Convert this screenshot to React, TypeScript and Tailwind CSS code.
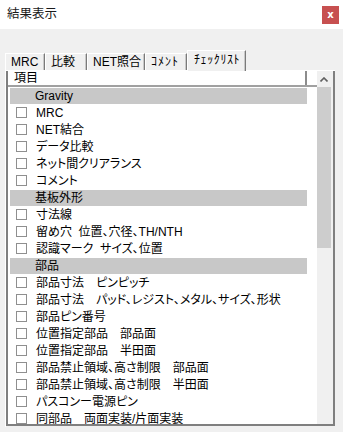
import React from 'react';

type Row = { kind: 'section' | 'item'; label: string };

const rows: Row[] = [
  { kind: 'section', label: 'Gravity' },
  { kind: 'item', label: 'MRC' },
  { kind: 'item', label: 'NET結合' },
  { kind: 'item', label: 'データ比較' },
  { kind: 'item', label: 'ネット間クリアランス' },
  { kind: 'item', label: 'コメント' },
  { kind: 'section', label: '基板外形' },
  { kind: 'item', label: '寸法線' },
  { kind: 'item', label: '留め穴  位置、穴径、TH/NTH' },
  { kind: 'item', label: '認識マーク  サイズ、位置' },
  { kind: 'section', label: '部品' },
  { kind: 'item', label: '部品寸法　ピンピッチ' },
  { kind: 'item', label: '部品寸法　パッド、レジスト、メタル、サイズ、形状' },
  { kind: 'item', label: '部品ピン番号' },
  { kind: 'item', label: '位置指定部品　部品面' },
  { kind: 'item', label: '位置指定部品　半田面' },
  { kind: 'item', label: '部品禁止領域、高さ制限　部品面' },
  { kind: 'item', label: '部品禁止領域、高さ制限　半田面' },
  { kind: 'item', label: 'パスコンー電源ピン' },
  { kind: 'item', label: '同部品　両面実装/片面実装' },
];

const tabs = [
  { label: 'MRC', w: 'w-[40px]', extra: '' },
  { label: '比較', w: 'w-[42px]', extra: '' },
  { label: 'NET照合', w: 'w-[58px]', extra: '' },
  { label: 'ｺﾒﾝﾄ', w: 'w-[42px]', extra: 'tracking-[1px]' },
];

export default function App() {
  return (
    <div className="w-[343px] h-[432px] overflow-hidden bg-[#f0f0f0] text-black text-[12px] leading-none font-['Liberation_Sans','Noto_Sans_CJK_JP',sans-serif] [font-feature-settings:'palt']">
      {/* title bar */}
      <div className="h-[29px] bg-white flex items-start justify-between">
        <span className="pl-[7px] pt-[8px] text-[12.5px] text-[#1a1a1a]">結果表示</span>
        <button className="mt-[6px] mr-[4px] w-[17px] h-[18px] bg-[#c75050] text-white text-[10px] font-bold flex items-center justify-center font-['DejaVu_Sans',sans-serif]">
          x
        </button>
      </div>

      {/* tabs */}
      <div className="mt-[21px] h-[20px] pl-[5px] flex items-end relative z-10">
        {tabs.map((t) => (
          <div
            key={t.label}
            className={`${t.w} ${t.extra} h-[17px] pl-[5px] flex items-center border-l border-t border-white border-r border-r-[#7a7a7a] shadow-[inset_-1px_0_0_#c8c8c8]`}
          >
            {t.label}
          </div>
        ))}
        <div className="w-[59px] h-[21px] -mb-[1px] pl-[6px] pb-[2px] tracking-[0.6px] flex items-center bg-[#f0f0f0] border-l border-t border-white border-r border-r-[#7a7a7a] shadow-[inset_-1px_0_0_#c8c8c8]">
          ﾁｪｯｸﾘｽﾄ
        </div>
      </div>

      {/* tab page */}
      <div className="ml-[5px] w-[330px] h-[357px] border-t border-l border-white">
        <div className="h-[355px] flex border-l-2 border-r-2 border-b-2 border-[#7f7f7f]">
          {/* list column */}
          <div className="w-[309px] bg-white overflow-hidden">
            <div className="h-[16px] flex border-b-2 border-[#a0a0a0] bg-white">
              <div className="w-[299px] pl-[6px] flex items-center border-r-2 border-r-[#8c8c8c]">項目</div>
              <div className="flex-1" />
            </div>
            {rows.map((r, i) =>
              r.kind === 'section' ? (
                <div key={i} className="h-[17px] pt-[1px] pl-[2px]">
                  <div className="w-[297px] h-[16px] bg-[#c8c8c8] pl-[25px] flex items-center">{r.label}</div>
                </div>
              ) : (
                <div key={i} className="h-[17px] pl-[8px] flex items-center whitespace-pre">
                  <span className="w-[11px] h-[11px] border border-[#8f8f8f] bg-white mr-[9px] shrink-0" />
                  {r.label}
                </div>
              )
            )}
          </div>
          {/* scrollbar */}
          <div className="w-[16px] bg-[#f0f0f0] flex flex-col">
            <div className="h-[16px] flex items-center justify-center pr-[2px]">
              <svg width="8" height="5" viewBox="0 0 8 5">
                <path d="M0.5 4.5 L4 1 L7.5 4.5" fill="none" stroke="#606060" strokeWidth="1.6" />
              </svg>
            </div>
            <div className="w-[14px] h-[161px] bg-[#cdcdcd]" />
          </div>
        </div>
      </div>
    </div>
  );
}
